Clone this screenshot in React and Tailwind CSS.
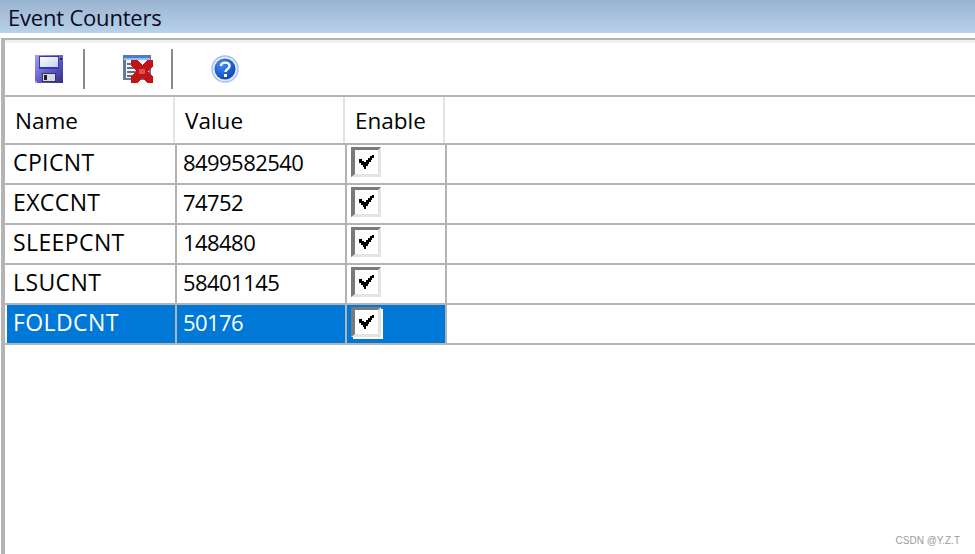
const FONT = "font-['Open_Sans','Noto_Sans',sans-serif]";

const SaveIcon = () => (
  <svg width="28" height="28" viewBox="0 0 28 28" shapeRendering="crispEdges" className="block">
    <defs>
      <linearGradient id="fl" x1="0" y1="0" x2="1" y2="1">
        <stop offset="0" stopColor="#a5a1f0" />
        <stop offset="0.55" stopColor="#5f59cc" />
        <stop offset="1" stopColor="#33307e" />
      </linearGradient>
      <linearGradient id="lb" x1="0" y1="0" x2="1" y2="1">
        <stop offset="0" stopColor="#ffffff" />
        <stop offset="1" stopColor="#c4cfea" />
      </linearGradient>
    </defs>
    <rect x="0" y="0" width="28" height="28" fill="url(#fl)" />
    <rect x="4" y="1" width="20" height="13" fill="#2c3cb4" />
    <rect x="5" y="2" width="18" height="10" fill="url(#lb)" />
    <rect x="25" y="3" width="2" height="2" fill="#2b2a70" />
    <rect x="7" y="18" width="14" height="9" fill="#34345c" />
    <rect x="8" y="19" width="12" height="7" fill="#d5d8e0" />
    <rect x="9" y="20" width="3" height="5" fill="#1d1d2e" />
    <rect x="0" y="26" width="2" height="2" fill="#e88ad0" />
  </svg>
);

const DeleteIcon = () => (
  <svg width="30" height="28" viewBox="0 0 30 28" shapeRendering="crispEdges" className="block">
    <rect x="0" y="0" width="28" height="25" fill="#64799c" />
    <rect x="1" y="1" width="26" height="2" fill="#3f7fdc" />
    <rect x="1" y="3" width="26" height="2" fill="#9dbcec" />
    <rect x="3" y="5" width="23" height="18" fill="#f6f6f6" />
    <rect x="4" y="8" width="10" height="2" fill="#66707e" />
    <rect x="4" y="12" width="10" height="2" fill="#66707e" />
    <rect x="4" y="16" width="10" height="2" fill="#66707e" />
    <rect x="4" y="20" width="10" height="2" fill="#66707e" />
    <path d="M8 5 H14 L19 10 L24 5 H30 V11 L25 16 L30 22 V28 H24 L19 23 L14 28 H8 V22 L13 16 L8 11 Z" fill="#c21414" />
    <rect x="16" y="14" width="6" height="5" fill="#da5050" />
  </svg>
);

const HelpIcon = () => (
  <svg width="28" height="28" viewBox="0 0 28 28" className="block">
    <defs>
      <radialGradient id="hb" cx="0.35" cy="0.3" r="0.8">
        <stop offset="0" stopColor="#3f8df5" />
        <stop offset="1" stopColor="#0c3fb4" />
      </radialGradient>
    </defs>
    <circle cx="14" cy="14" r="13" fill="#e2ecf8" stroke="#a9c4e2" strokeWidth="1.5" />
    <circle cx="14" cy="14" r="10.5" fill="url(#hb)" />
    <path d="M10 11 C10 6.5 18.5 6.5 18.5 11 C18.5 14 14.5 14 14.5 17" fill="none" stroke="#fff" strokeWidth="2.4" />
    <rect x="13" y="19" width="3" height="3" fill="#fff" />
  </svg>
);

const Check = ({ selected }) => (
  <div className={`w-[30px] h-[30px] border-[3px] border-l-4 border-t-[#7a7a7a] border-l-[#7a7a7a] border-r-[#e3e3e3] border-b-[#e3e3e3] bg-white flex items-center justify-center ${selected ? "shadow-[2px_2px_0_#fff]" : ""}`}>
    <svg width="15" height="14" viewBox="0 0 15 14" shapeRendering="crispEdges" className="block">
      <path d="M0 4H3V6H5V7H7V5H9V3H11V1H13V0H15V3H13V5H12V7H10V9H9V11H7V14H5V12H4V10H2V8H0Z" fill="#000" />
    </svg>
  </div>
);

const rows = [
  ["CPICNT", "8499582540"],
  ["EXCCNT", "74752"],
  ["SLEEPCNT", "148480"],
  ["LSUCNT", "58401145"],
  ["FOLDCNT", "50176"],
];

export default function App() {
  return (
    <div className={`${FONT} w-[975px] h-[554px] overflow-hidden bg-white flex flex-col text-[22.5px] text-black`}>
      <div className="h-[33px] shrink-0 bg-gradient-to-b from-[#99b4d1] to-[#b9d1ea] pl-2 text-[22px] tracking-[-0.2px] leading-[34px] text-[#0a0a1e]">
        Event Counters
      </div>
      <div className="h-[5px] shrink-0 bg-white" />
      <div className="flex-1 flex flex-col border-t-2 border-l-4 ml-px border-[#b4b4b4] min-h-0">
        <div className="h-[3px] bg-[#f0f0f0] shrink-0" />
        <div className="h-[54px] shrink-0 flex items-center border-b-2 border-[#b4b4b4]">
          <div className="ml-[30px] w-7"><SaveIcon /></div>
          <div className="ml-5 w-[2px] h-10 bg-[#8c8c8c]" />
          <div className="ml-[38px] w-[30px]"><DeleteIcon /></div>
          <div className="ml-[18px] w-[2px] h-10 bg-[#8c8c8c]" />
          <div className="ml-[38px] w-7"><HelpIcon /></div>
        </div>
        <div className="h-12 shrink-0 flex border-b-2 border-[#b4b4b4]">
          <div className="w-[170px] pl-[10px] border-r-2 border-[#e3e3e3] leading-[48px]">Name</div>
          <div className="w-[170px] pl-[10px] border-r-2 border-[#e3e3e3] leading-[48px]">Value</div>
          <div className="w-[100px] pl-[10px] border-r-2 border-[#e3e3e3] leading-[48px]">Enable</div>
        </div>
        {rows.map(([name, value], i) => {
          const selected = i === rows.length - 1;
          return (
            <div key={name} className="h-10 shrink-0 flex pl-[2px] border-b-2 border-[#b4b4b4]">
              <div className={`w-[170px] pl-[6px] border-r-2 border-[#b4b4b4] text-[23px] leading-[34px] tracking-[0.4px] ${selected ? "bg-[#0078d7] text-white" : ""}`}>{name}</div>
              <div className={`w-[170px] pl-[6px] border-r-2 border-[#b4b4b4] text-[22px] leading-[34px] tracking-[-0.55px] ${selected ? "bg-[#0078d7] text-white" : ""}`}>{value}</div>
              <div className={`w-[100px] pl-1 pt-[2px] border-r-2 border-[#b4b4b4] ${selected ? "bg-[#0078d7]" : ""}`}>
                <Check selected={selected} />
              </div>
              <div className="flex-1" />
            </div>
          );
        })}
        <div className="flex-1 flex items-end justify-end pr-[15px] pb-[7px]">
          <span className="font-['Liberation_Sans',sans-serif] text-[10px] leading-[12px] text-[#9a9a9a]">CSDN @Y.Z.T</span>
        </div>
      </div>
    </div>
  );
}
